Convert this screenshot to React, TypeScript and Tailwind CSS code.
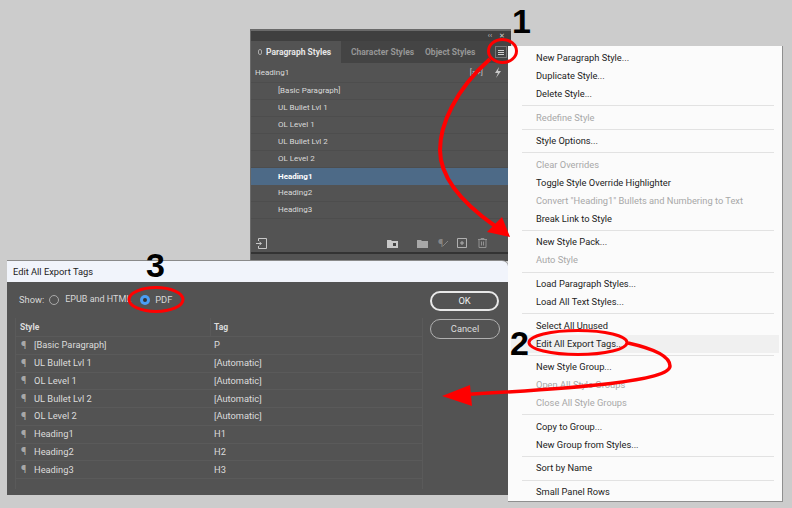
const sans = "font-['Roboto','Noto_Sans',sans-serif]";
const digit = "absolute text-[34px] leading-[36px] font-bold text-black font-['Liberation_Sans',sans-serif]";

type MenuEntry = { label: string; off?: boolean; hover?: boolean } | "sep";

const MENU: MenuEntry[] = [
  { label: "New Paragraph Style..." },
  { label: "Duplicate Style..." },
  { label: "Delete Style..." },
  "sep",
  { label: "Redefine Style", off: true },
  "sep",
  { label: "Style Options..." },
  "sep",
  { label: "Clear Overrides", off: true },
  { label: "Toggle Style Override Highlighter" },
  { label: 'Convert "Heading1" Bullets and Numbering to Text', off: true },
  { label: "Break Link to Style" },
  "sep",
  { label: "New Style Pack..." },
  { label: "Auto Style", off: true },
  "sep",
  { label: "Load Paragraph Styles..." },
  { label: "Load All Text Styles..." },
  "sep",
  { label: "Select All Unused" },
  { label: "Edit All Export Tags...", hover: true },
  "sep",
  { label: "New Style Group..." },
  { label: "Open All Style Groups", off: true },
  { label: "Close All Style Groups", off: true },
  "sep",
  { label: "Copy to Group..." },
  { label: "New Group from Styles..." },
  "sep",
  { label: "Sort by Name" },
  "sep",
  { label: "Small Panel Rows" },
];

const STYLES = ["[Basic Paragraph]", "UL Bullet Lvl 1", "OL Level 1", "UL Bullet Lvl 2", "OL Level 2", "Heading1", "Heading2", "Heading3"];

const TAGS: [string, string][] = [
  ["[Basic Paragraph]", "P"],
  ["UL Bullet Lvl 1", "[Automatic]"],
  ["OL Level 1", "[Automatic]"],
  ["UL Bullet Lvl 2", "[Automatic]"],
  ["OL Level 2", "[Automatic]"],
  ["Heading1", "H1"],
  ["Heading2", "H2"],
  ["Heading3", "H3"],
];

function StylesPanel() {
  return (
    <div className="absolute left-[250px] top-[29px] w-[261px] h-[232px] bg-[#535353] border-l border-t-2 border-[#6a6a6a] flex flex-col">
      {/* collapse strip */}
      <div className="h-[10px] shrink-0 bg-[#3f3f3f] flex items-center justify-end gap-[7px] pr-[6px] text-[7px] leading-none text-[#c8c8c8]">
        <span>‹‹</span>
        <span>✕</span>
      </div>
      {/* tabs */}
      <div className="h-[22px] shrink-0 bg-[#444444] flex items-center text-[8.5px] font-bold">
        <div className="w-[90px] h-full bg-[#535353] flex items-center pl-[7px] gap-[4px] text-[#e6e6e6]">
          <span className="w-[4px] h-[6px] border border-[#aaa] rounded-full" />
          Paragraph Styles
        </div>
        <span className="ml-[10px] w-[74px] text-[#969696]">Character Styles</span>
        <span className="text-[#969696]">Object Styles</span>
        <div className="ml-[20px] w-[12px] h-[12px] flex flex-col justify-center gap-[1px] border border-[#777] px-[2px]">
          <span className="h-px bg-[#cfcfcf]" />
          <span className="h-px bg-[#cfcfcf]" />
          <span className="h-px bg-[#cfcfcf]" />
        </div>
      </div>
      {/* current style */}
      <div className="h-[20px] shrink-0 w-[258px] border-b border-[#4d4d4d] flex items-center pl-[4px] pr-[7px] text-[8px] text-[#dcdcdc]">
        Heading1
        <span className="ml-auto text-[8px] text-[#c8c8c8]">[a+]</span>
        <svg width="8" height="11" viewBox="0 0 8 11" className="ml-[11px]">
          <path d="M5 0 L1 6 H4 L2 11 L7 4 H4 Z" fill="#c8c8c8" />
        </svg>
      </div>
      {STYLES.map((s) => (
        <div
          key={s}
          className={
            s === "Heading1"
              ? "h-[17px] shrink-0 w-[258px] bg-[#4d6a87] flex items-center pl-[27px] text-[8px] font-bold text-white"
              : "h-[17px] shrink-0 w-[258px] border-b border-[#4d4d4d] flex items-center pl-[27px] text-[8px] text-[#dadada]"
          }
        >
          {s}
        </div>
      ))}
      {/* footer icons */}
      <div className="mt-[16px] shrink-0 flex items-center px-[5px] h-[16px]">
        <svg width="11" height="11" viewBox="0 0 11 11" fill="none" stroke="#c8c8c8">
          <path d="M2.5 3V.5h8v10h-8V8M0 5.5h5M3.5 4l2 1.5-2 1.5" />
        </svg>
        <svg width="11" height="9" viewBox="0 0 11 9" className="ml-[120px]">
          <path d="M0 1h4l1 1h6v7H0z" fill="#c8c8c8" />
          <path d="M6 4h3v3H6z" fill="#444" />
        </svg>
        <svg width="11" height="9" viewBox="0 0 11 9" className="ml-[19px]">
          <path d="M0 1h4l1 1h6v7H0z" fill="#a8a8a8" />
        </svg>
        <span className="ml-[10px] text-[11px] leading-none text-[#858585]">¶</span>
        <svg width="5" height="5" viewBox="0 0 5 5">
          <path d="M0 5 L5 0" stroke="#858585" />
        </svg>
        <svg width="10" height="10" viewBox="0 0 10 10" className="ml-[9px]" fill="none" stroke="#b0b0b0">
          <path d="M.5.5h9v9h-9zM5 3v4M3 5h4" />
        </svg>
        <svg width="9" height="10" viewBox="0 0 9 10" className="ml-[11px]" fill="none" stroke="#929292">
          <path d="M0 1.5h9M3 1.5V.5h3v1M1 1.5v8h7v-8M3.5 3.5v4M5.5 3.5v4" />
        </svg>
      </div>
      <div className="mt-[1px] h-[2px] w-[258px] shrink-0 bg-[#333333]" />
    </div>
  );
}

function PanelMenu() {
  return (
    <div className="absolute left-[508px] top-[46px] w-[275px] h-[456px] bg-[#fbfbfb] border-r border-b border-[#8f8f8f] pt-[3px] px-[3px] flex flex-col text-[9.3px] text-[#1c1c1c]">
      {MENU.map((m, i) =>
        m === "sep" ? (
          <div key={i} className="h-[5.6px] shrink-0 flex items-center pl-[11px] pr-[5px]">
            <div className="h-px w-full bg-[#e2e2e2]" />
          </div>
        ) : (
          <div
            key={m.label}
            className={`h-[18px] shrink-0 flex items-center pl-[25px] ${m.off ? "text-[#a8a8a8]" : ""} ${m.hover ? "bg-[#f0f0f0]" : ""}`}
          >
            {m.label}
          </div>
        ),
      )}
    </div>
  );
}

function ExportDialog() {
  return (
    <div className="absolute left-[7px] top-[260px] w-[501px] h-[235px] bg-[#535353] border-t border-[#8a8a8a] rounded-tr-[6px] overflow-hidden flex flex-col">
      <div className="h-[21px] shrink-0 bg-[#f1f4fb] flex items-center pl-[6px] text-[9.3px] text-[#222]">Edit All Export Tags</div>
      <div className="flex-1 flex pl-[8px] pt-[10px]">
        <div className="w-[408px]">
          <div className="h-[16px] flex items-center pl-[4px] text-[9.3px] text-[#d8d8d8]">
            Show:
            <span className="ml-[5px] w-[10px] h-[10px] rounded-full border border-[#aaa]" />
            <span className="ml-[6px] w-[64px] whitespace-nowrap text-[9px]">EPUB and HTML</span>
            <span className="ml-[11px] w-[10px] h-[10px] rounded-full bg-[#4a9ef5] flex items-center justify-center">
              <span className="w-[4px] h-[4px] rounded-full bg-[#333]" />
            </span>
            <span className="ml-[5px]">PDF</span>
          </div>
          <div className="mt-[10px] border-l border-r border-[#5a5a5a]">
            <div className="h-[19px] flex items-center border-b border-[#5a5a5a] text-[8.5px] font-bold text-[#dcdcdc]">
              <span className="w-[195px] h-full flex items-center pl-[4px] border-r border-[#5a5a5a]">Style</span>
              <span className="pl-[3px]">Tag</span>
            </div>
            {TAGS.map(([s, t]) => (
              <div key={s} className="h-[17.75px] flex items-center border-b border-[#5a5a5a] text-[9.3px] text-[#dcdcdc]">
                <span className="w-[195px] flex items-center pl-[5px]">
                  <span className="w-[13px] text-[11px] leading-none text-[#a8a8a8]">¶</span>
                  {s}
                </span>
                <span className="pl-[3px]">{t}</span>
              </div>
            ))}
            <div className="h-[10px]" />
          </div>
        </div>
        <div className="ml-[7px] -mt-[1px] flex flex-col gap-[8px]">
          <div className="w-[69px] h-[20px] rounded-full border-2 border-[#e8e8e8] flex items-center justify-center text-[9.3px] text-[#eee]">OK</div>
          <div className="w-[70px] h-[20px] rounded-full border border-[#b0b0b0] flex items-center justify-center text-[9.3px] text-[#ddd]">Cancel</div>
        </div>
      </div>
    </div>
  );
}

function Annotations() {
  return (
    <>
      <svg width="792" height="508" viewBox="0 0 792 508" className="absolute left-0 top-0" fill="none" stroke="#f00" strokeWidth="3">
        <ellipse cx="502.5" cy="51" rx="14" ry="11.5" />
        <ellipse cx="156" cy="299.5" rx="27" ry="12" />
        <ellipse cx="578" cy="342.5" rx="49" ry="12" />
        <path d="M490 59 C455 90 440 125 440 150 C440 180 465 205 495 226" strokeWidth="4" />
        <path d="M628 343 C655 349 670 357 670 366 C670 381 580 388 465 394.5" strokeWidth="3.5" />
        <path d="M510 237 L487 232 L502 217 Z" fill="#f00" stroke="none" />
        <path d="M442 396 L470 385 L472 406 Z" fill="#f00" stroke="none" />
      </svg>
      <span className={`${digit} left-[512px] top-[3px]`}>1</span>
      <span className={`${digit} left-[510px] top-[325px]`}>2</span>
      <span className={`${digit} left-[146px] top-[247px]`}>3</span>
    </>
  );
}

export default function App() {
  return (
    <div className={`relative w-[792px] h-[508px] overflow-hidden bg-[#cccccc] ${sans}`}>
      <StylesPanel />
      <PanelMenu />
      <ExportDialog />
      <Annotations />
    </div>
  );
}
